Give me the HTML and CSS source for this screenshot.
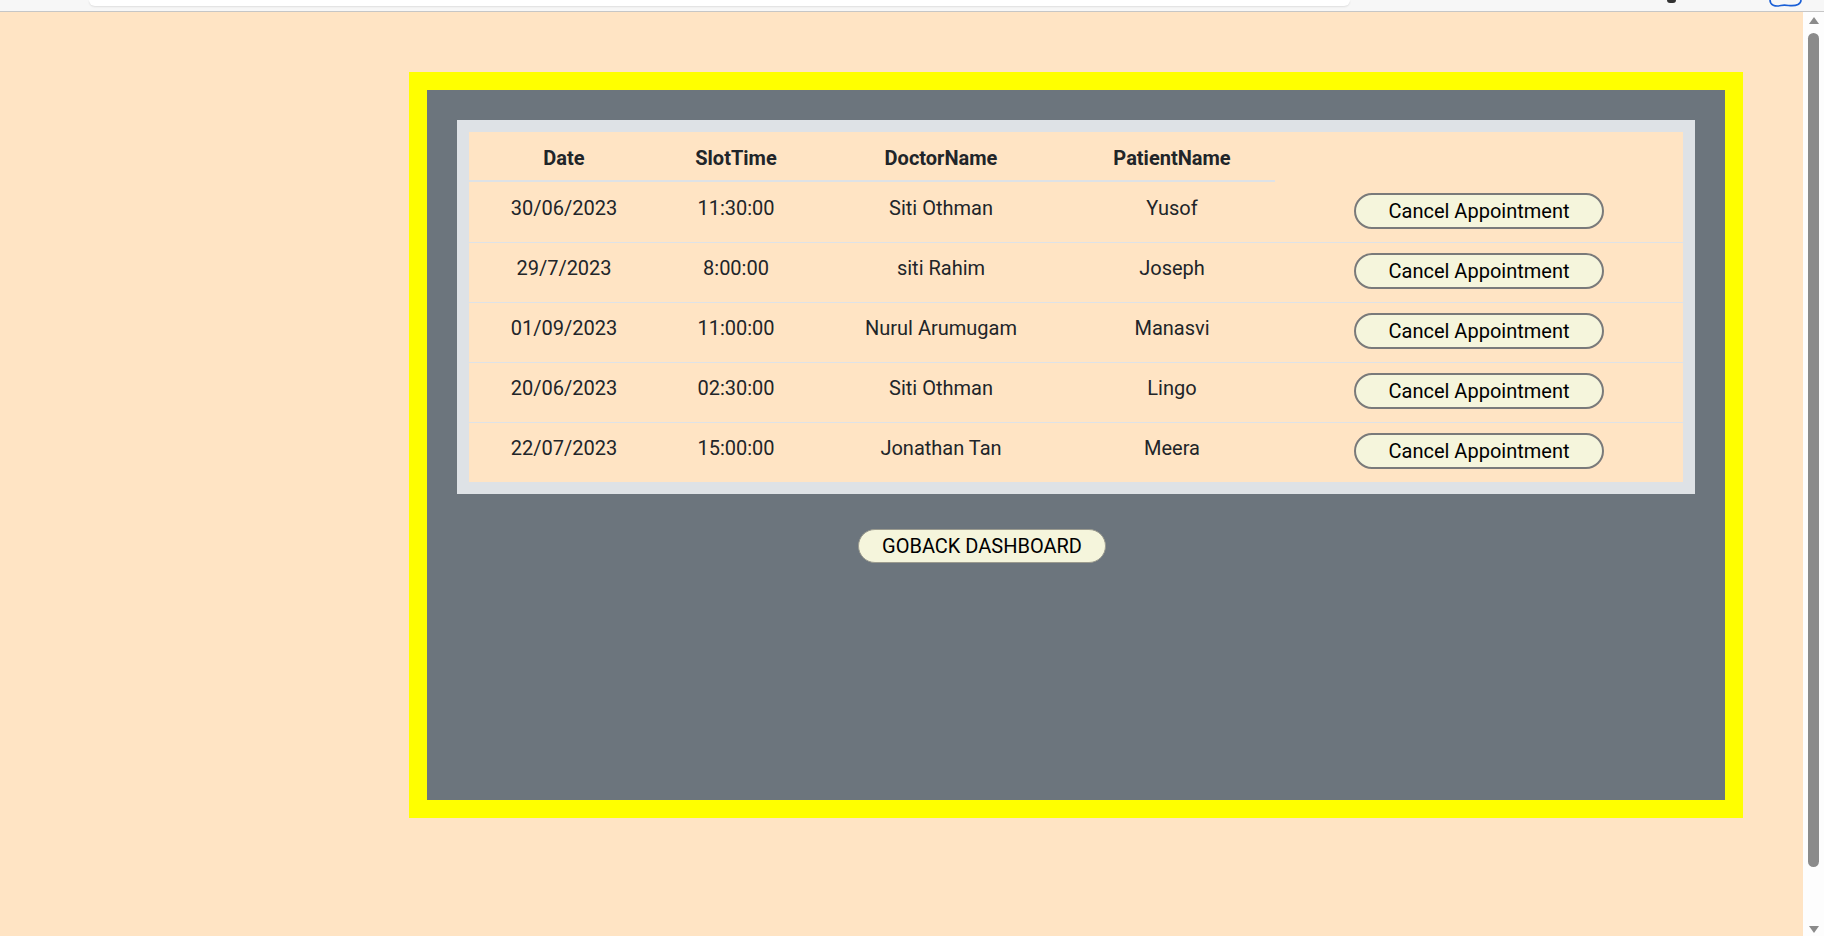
FILE: index.html
```html
<!DOCTYPE html>
<html lang="en">
<head>
<meta charset="utf-8">
<title>Appointments</title>
<link rel="stylesheet" href="styles.css">
</head>
<body>
<div class="chrome">
  <div class="addr"></div>
  <div class="tool-dark"></div>
  <svg class="tool-blue" width="34" height="8" viewBox="0 0 34 8"><path d="M2 0 C2 5 7 7 13 5.5 C19 4 24 7.5 30 4.5 C32 3.5 33 2 33 0" fill="none" stroke="#1a5fd6" stroke-width="1.6"/></svg>
</div>
<div class="viewport">
  <main class="page">
    <section class="frame">
      <div class="table-wrap">
        <table class="appt">
          <colgroup>
            <col class="c-date"><col class="c-slot"><col class="c-doc"><col class="c-pat"><col class="c-act">
          </colgroup>
          <thead>
            <tr><th>Date</th><th>SlotTime</th><th>DoctorName</th><th>PatientName</th><th class="empty"></th></tr>
          </thead>
          <tbody>
            <tr><td>30/06/2023</td><td>11:30:00</td><td>Siti Othman</td><td>Yusof</td><td><button class="cancel">Cancel Appointment</button></td></tr>
            <tr><td>29/7/2023</td><td>8:00:00</td><td>siti Rahim</td><td>Joseph</td><td><button class="cancel">Cancel Appointment</button></td></tr>
            <tr><td>01/09/2023</td><td>11:00:00</td><td>Nurul Arumugam</td><td>Manasvi</td><td><button class="cancel">Cancel Appointment</button></td></tr>
            <tr><td>20/06/2023</td><td>02:30:00</td><td>Siti Othman</td><td>Lingo</td><td><button class="cancel">Cancel Appointment</button></td></tr>
            <tr><td>22/07/2023</td><td>15:00:00</td><td>Jonathan Tan</td><td>Meera</td><td><button class="cancel">Cancel Appointment</button></td></tr>
          </tbody>
        </table>
      </div>
      <div class="actions">
        <button class="goback">GOBACK DASHBOARD</button>
      </div>
    </section>
  </main>
  <div class="scrollbar">
    <div class="sb-up"></div>
    <div class="sb-thumb"></div>
    <div class="sb-down"></div>
  </div>
</div>
</body>
</html>
```
FILE: styles.css
```css
* { box-sizing: border-box; }
html, body { margin: 0; padding: 0; }
body {
  width: 1824px;
  height: 936px;
  overflow: hidden;
  display: flex;
  flex-direction: column;
  font-family: Roboto, "Noto Sans", "Liberation Sans", sans-serif;
  background: #ffe4c4;
}

/* browser chrome remnant */
.chrome {
  flex: none;
  height: 12px;
  background: #f7f7f7;
  border-bottom: 1px solid #c6c6c6;
  display: flex;
  align-items: flex-start;
}
.addr {
  margin-left: 89px;
  width: 1261px;
  height: 6px;
  background: #ffffff;
  border-radius: 0 0 12px 12px;
  box-shadow: 0 1px 2px rgba(0,0,0,0.10);
}
.tool-dark {
  margin-left: 317px;
  width: 9px;
  height: 3px;
  background: #333;
  border-radius: 0 0 3px 3px;
}
.tool-blue {
  margin-left: 92px;
  display: block;
}

.viewport {
  flex: 1;
  display: flex;
  min-height: 0;
}
.page {
  flex: 1;
  padding: 60px 0 0 409px;
  background: #ffe4c4;
}

.frame {
  width: 1334px;
  height: 746px;
  border: 18px solid #ffff00;
  background: #6c757d;
  padding: 30px;
}

.table-wrap {
  width: 1238px;
  background: #dee2e6;
  padding: 12px;
}

.appt {
  width: 1214px;
  table-layout: fixed;
  border-collapse: separate;
  border-spacing: 0;
  background: #ffe4c4;
  color: #212529;
  font-size: 20px;
  line-height: 30px;
}
.c-date { width: 190px; }
.c-slot { width: 154px; }
.c-doc { width: 256px; }
.c-pat { width: 206px; }
.c-act { width: 408px; }

.appt th {
  font-weight: 700;
  text-align: center;
  vertical-align: top;
  padding: 11px 0 7px;
  border-bottom: 2px solid #dee2e6;
}
.appt th.empty { border-bottom-color: transparent; }

.appt td {
  text-align: center;
  vertical-align: top;
  padding: 10px 0 13px;
  border-top: 1px solid #dee2e6;
}
.appt tbody tr:first-child td { border-top-color: transparent; }

.cancel {
  display: block;
  margin: 0 auto;
  width: 250px;
  height: 36px;
  padding: 0;
  border: 2px solid #7a7a7a;
  border-radius: 18px;
  background: #f5f5dc;
  color: #000;
  font-family: Roboto, "Noto Sans", sans-serif;
  font-size: 20px;
  line-height: 30px;
}

.actions {
  margin-top: 35px;
  padding-left: 401px;
}
.goback {
  display: block;
  width: 248px;
  height: 34px;
  padding: 0;
  border: 1px solid #9b9b8f;
  border-radius: 17px;
  background: #f5f5dc;
  color: #000;
  font-family: Roboto, "Noto Sans", sans-serif;
  font-size: 20px;
  line-height: 30px;
}

/* fake scrollbar */
.scrollbar {
  flex: none;
  width: 21px;
  background: #fdfdfd;
  display: flex;
  flex-direction: column;
  align-items: center;
}
.sb-up {
  margin-top: 5px;
  width: 0;
  height: 0;
  border-left: 5px solid transparent;
  border-right: 5px solid transparent;
  border-bottom: 7px solid #8b8b8b;
}
.sb-thumb {
  margin-top: 9px;
  width: 11px;
  height: 834px;
  border-radius: 6px;
  background: #8b8b8b;
}
.sb-down {
  margin-top: auto;
  margin-bottom: 3px;
  width: 0;
  height: 0;
  border-left: 5px solid transparent;
  border-right: 5px solid transparent;
  border-top: 7px solid #8b8b8b;
}
```
